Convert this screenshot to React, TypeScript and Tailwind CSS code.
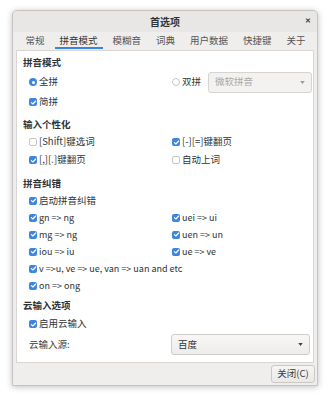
import React from "react";

const font = { fontFamily: '"Noto Sans CJK SC", "Noto Sans", sans-serif' };

function Check({ on = true }: { on?: boolean }) {
  return on ? (
    <span className="flex h-[8px] w-[8px] shrink-0 items-center justify-center rounded-[2px] bg-[#3d86dd]">
      <svg viewBox="0 0 8 8" className="h-[7px] w-[7px]">
        <path d="M1.6 4.1 L3.3 5.7 L6.5 2.3" fill="none" stroke="#fff" strokeWidth="1.3" strokeLinecap="round" strokeLinejoin="round" />
      </svg>
    </span>
  ) : (
    <span className="h-[8px] w-[8px] shrink-0 rounded-[2px] border border-[#c9c6c2] bg-white" />
  );
}

function Radio({ on }: { on?: boolean }) {
  return on ? (
    <span className="flex h-[8px] w-[8px] shrink-0 items-center justify-center rounded-full bg-[#3d86dd]">
      <span className="h-[3px] w-[3px] rounded-full bg-white" />
    </span>
  ) : (
    <span className="h-[8px] w-[8px] shrink-0 rounded-full border border-[#c9c6c2] bg-white" />
  );
}

function Item({ on = true, label, h = "h-[18px]", small }: { on?: boolean; label: string; h?: string; small?: boolean }) {
  return (
    <div className={`flex ${h} items-center gap-[2px]`}>
      <Check on={on} />
      <span className={`whitespace-nowrap ${small ? "text-[9px]" : ""}`}>{label}</span>
    </div>
  );
}

function Heading({ children, className = "" }: { children: React.ReactNode; className?: string }) {
  return <div className={`flex h-[14px] items-center pl-[6px] font-bold ${className}`}>{children}</div>;
}

function Arrow({ color = "#555" }: { color?: string }) {
  return (
    <svg viewBox="0 0 6 4" className="h-[3px] w-[5px]">
      <path d="M0 0 H6 L3 4 Z" fill={color} />
    </svg>
  );
}

const tabs = ["常规", "拼音模式", "模糊音", "词典", "用户数据", "快捷键", "关于"];

export default function App() {
  return (
    <div style={font} className="h-[400px] w-[331px] overflow-hidden bg-white pl-[12px] pt-[10px] text-[9.5px] leading-none text-[#2e3436]">
      <div className="flex h-[376px] w-[306px] flex-col rounded-t-[5px] border border-[#c6c3c0] bg-[#efeeec] shadow-[0_1px_6px_rgba(0,0,0,0.25)]">
        {/* title bar */}
        <div className="relative flex h-[21px] items-center justify-center rounded-t-[5px] bg-[#e9e7e5]">
          <span className="font-bold text-[10px]">首选项</span>
          <span className="absolute right-[6px] top-[6px] text-[7px] font-bold text-[#444]">✕</span>
        </div>

        {/* tabs */}
        <div className="flex h-[18px] pl-[5px]">
          {tabs.map((t, i) => (
            <div key={t} className={`relative flex items-center px-[7.5px] pb-[1px] ${i === 1 ? "text-[#333]" : "text-[#555]"}`}>
              {t}
              {i === 1 && <span className="absolute bottom-[1px] left-[3px] right-[2px] h-[2px] bg-[#3584e4]" />}
            </div>
          ))}
        </div>

        {/* content */}
        <div className="mx-[3px] flex h-[313px] flex-col border border-[#d8d5d2] bg-white pt-[5px]">
          <Heading>拼音模式</Heading>
          <div className="mt-[1px] grid h-[22px] grid-cols-[143px_1fr] items-center pl-[12px]">
            <div className="flex items-center gap-[2px]">
              <Radio on />
              <span>全拼</span>
            </div>
            <div className="flex items-center gap-[2px]">
              <Radio />
              <span>双拼</span>
              <div className="ml-[5px] flex h-[21px] w-[104px] items-center justify-between rounded-[3px] border border-[#d6d3d0] bg-[#f3f2f1] px-[6px] text-[#a9a9a7]">
                <span>微软拼音</span>
                <Arrow color="#999" />
              </div>
            </div>
          </div>
          <div className="pl-[12px]">
            <Item label="简拼" />
          </div>

          <Heading className="mt-[7px]">输入个性化</Heading>
          <div className="mt-[1px] grid grid-cols-[143px_1fr] pl-[12px]">
            <Item on={false} label="[Shift]键选词" />
            <Item label="[-][=]键翻页" />
            <Item label="[,][.]键翻页" />
            <Item on={false} label="自动上词" />
          </div>

          <Heading className="mt-[8px]">拼音纠错</Heading>
          <div className="mt-[1px] grid grid-cols-[143px_1fr] pl-[12px]">
            <div className="col-span-2">
              <Item label="启动拼音纠错" h="h-[17px]" />
            </div>
            <Item label="gn => ng" h="h-[17px]" small />
            <Item label="uei => ui" h="h-[17px]" small />
            <Item label="mg => ng" h="h-[17px]" small />
            <Item label="uen => un" h="h-[17px]" small />
            <Item label="iou => iu" h="h-[17px]" small />
            <Item label="ue => ve" h="h-[17px]" small />
            <div className="col-span-2">
              <Item label="v =>u, ve => ue, van => uan and etc" h="h-[17px]" small />
            </div>
            <div className="col-span-2">
              <Item label="on => ong" h="h-[17px]" small />
            </div>
          </div>

          <Heading className="mt-[5px]">云输入选项</Heading>
          <div className="mt-[2px] pl-[12px]">
            <Item label="启用云输入" />
          </div>
          <div className="mt-[1px] grid h-[21px] grid-cols-[143px_1fr] items-center pl-[12px]">
            <span className="text-[#3a3a3a]">云输入源:</span>
            <div className="-ml-[1px] flex h-[21px] w-[139px] items-center justify-between rounded-[3px] border border-[#d0ccc8] bg-gradient-to-b from-[#f8f7f6] to-[#eeecea] px-[6px]">
              <span>百度</span>
              <Arrow color="#444" />
            </div>
          </div>
        </div>

        {/* footer */}
        <div className="flex flex-1 items-center justify-end pr-[2px]">
          <div className="flex h-[18px] w-[44px] items-center justify-center rounded-[3px] border border-[#cdc8c3] bg-gradient-to-b from-[#f6f5f4] to-[#ebe9e7] text-[#3a3a3a]">
            关闭(C)
          </div>
        </div>
      </div>
    </div>
  );
}
